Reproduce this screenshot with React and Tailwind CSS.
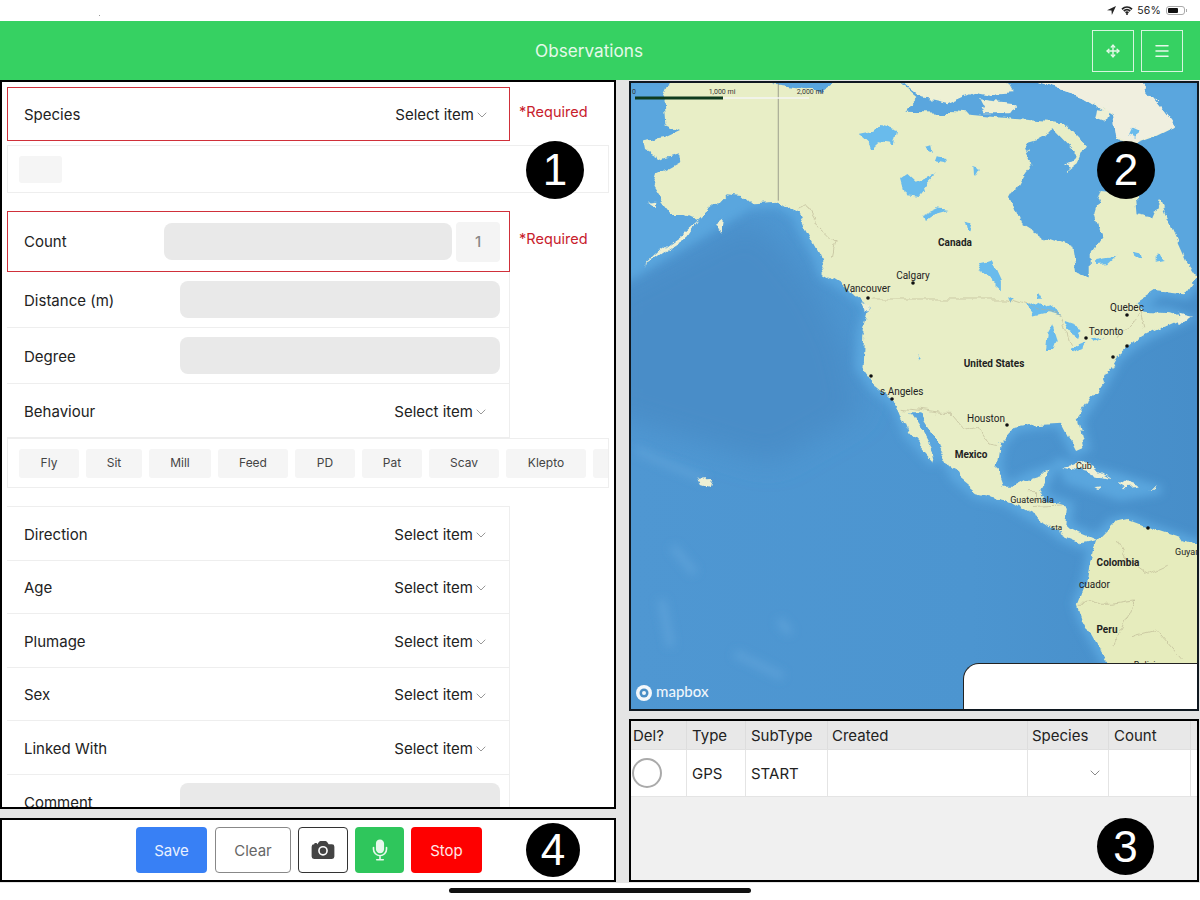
import React from "react";
import { ChevronDown, Menu, Move } from "lucide-react";
import { IoCamera, IoMic } from "react-icons/io5";

const F = "font-['Inter','Liberation_Sans',sans-serif]";

const Badge = ({ n, className }) => (
  <div className={`absolute flex items-center justify-center rounded-full bg-black text-white text-[44px] leading-none font-['Liberation_Sans',sans-serif] ${className}`}>{n}</div>
);

const Select = () => (
  <span className="flex items-center text-[15px] text-[#222]">
    Select item
    <ChevronDown size={16} strokeWidth={1.3} className="text-[#888]" />
  </span>
);

const Row = ({ label, children, h = "h-[53.6px]" }) => (
  <div className={`flex items-center justify-between w-[503px] ${h} pl-[17px] border-b border-r border-[#eeeeee] text-[15px] text-[#222] shrink-0`}>
    <span className="pt-[3px]">{label}</span>
    {children}
  </div>
);

const SelectRow = ({ label }) => (
  <Row label={label}><span className="pr-[20px] pt-[3px]"><Select /></span></Row>
);

const Field = () => <div className="w-[320px] h-[37px] mr-[9px] rounded-lg bg-[#e9e9e9]" />;

const Required = ({ className }) => (
  <span className={`absolute left-[517px] text-[14.5px] tracking-[0.05px] text-[#c8202c] ${className}`}>*Required</span>
);

const chips = [
  ["Fly", "w-[60px]"], ["Sit", "w-[56px]"], ["Mill", "w-[62px]"], ["Feed", "w-[70px]"],
  ["PD", "w-[60px]"], ["Pat", "w-[60px]"], ["Scav", "w-[70px]"], ["Klepto", "w-[80px]"],
];

const land = "M130 0L105 60L110 130L150 150L110 170L55 180L60 210L100 235L145 220L148 250L115 270L85 285L75 320L95 355L130 405L165 405L195 420L215 400L250 370L275 340L320 345L345 370L420 365L470 400L490 450L530 530L545 580L590 610L640 650L670 680L650 760L645 860L680 915L730 960L750 990L775 1060L845 1145L840 1120L805 1050L775 1000L800 1000L870 1120L905 1190L960 1240L1040 1260L1100 1300L1150 1330L1200 1370L1245 1390L1285 1380L1240 1360L1200 1340L1205 1280L1150 1260L1130 1230L1155 1175L1110 1190L1060 1220L1030 1220L1010 1160L1020 1090L1060 1040L1120 1030L1190 1025L1230 1110L1250 1100L1232 1020L1300 910L1340 830L1385 790L1430 760L1520 715L1480 700L1420 695L1395 670L1450 630L1530 640L1560 590L1530 540L1490 440L1460 360L1440 410L1395 400L1390 340L1300 330L1280 400L1290 440L1300 470L1270 520L1270 600L1230 570L1220 500L1140 470L1080 430L1050 350L1080 290L1110 250L1090 190L1120 180L1170 150L1240 230L1205 280L1240 250L1260 200L1200 130L1100 120L1000 110L900 100L770 95L800 60L740 0L580 0L530 35L420 20L380 0Z";
const southAm = "M1285 1380L1275 1410L1260 1500L1235 1570L1250 1620L1310 1740L1350 1800L1600 1800L1600 1410L1500 1370L1430 1345L1370 1320L1330 1330Z";
const islands = [
  "M745 0L1040 0L1060 40L1000 45L950 35L880 70L800 50Z",
  "M960 58L1060 70L1040 100L980 100Z",
  "M1100 0L1250 50L1340 110L1340 180L1400 190L1450 170L1505 140L1470 90L1400 0Z",
  "M1195 1160L1250 1145L1330 1195L1270 1180Z",
  "M1350 1200L1405 1220L1360 1225Z",
  "M1280 1225L1300 1222L1290 1230Z",
  "M1430 1222L1450 1222L1445 1228Z",
  "M200 420L170 470L100 520L50 560L100 510L150 470Z",
  "M240 440L265 420L260 455Z",
  "M60 365L80 362L78 378Z",
  "M640 655L665 670L672 695L650 675Z",
  "M205 1190L235 1188L228 1220L212 1215Z",
  "M1197 250L1235 240L1222 262Z",
  "M1500 695L1540 705L1510 730Z",
  "M1290 85L1320 90L1310 125L1285 115Z",
];
const lakes = [
  "M635 165L680 155L700 135L740 150L730 195L690 190L670 210L660 190Z",
  "M750 300L770 285L790 305L850 280L825 310L800 345L760 340Z",
  "M810 405L850 385L885 390L835 405L815 420Z",
  "M965 550L985 545L1000 540L1025 600L1025 625L1000 600L985 590Z",
  "M1090 680L1130 665L1190 710L1150 700L1110 710Z",
  "M1165 730L1180 780L1170 810L1145 810L1150 760Z",
  "M1200 725L1250 745L1240 775L1215 760Z",
  "M1205 810L1260 785L1250 805L1215 820Z",
  "M1270 775L1300 770L1280 782Z",
  "M925 425L945 430L938 460L930 450Z",
  "M1285 540L1340 530L1320 550L1285 552Z",
  "M1385 515L1405 520L1410 545L1390 535Z",
  "M1380 140L1400 150L1395 170L1372 160Z",
  "M950 255L965 260L952 285Z",
  "M1450 525L1475 540L1450 545Z",
  "M1045 645L1060 655L1050 665Z",
  "M800 815L812 830L805 835Z",
  "M1130 630L1140 650L1125 650Z",
  "M820 195L835 190L840 215L825 210Z",
  "M850 235L880 240L870 255L845 250Z",
];
const borders = [
  "M470 390L500 380L530 440L570 480L560 530",
  "M670 657L1040 657L1090 675L1190 710L1215 800",
  "M1340 775L1385 730L1410 695L1420 745",
  "M760 985L860 1000L890 1000L925 1045L960 1035L995 1095L1015 1100",
  "M1100 1235L1125 1235L1125 1260M1110 1280L1190 1275",
  "M1340 1380L1370 1440L1420 1480L1480 1450M1240 1570L1330 1570L1390 1560L1330 1700M1380 1670L1450 1650L1520 1740",
];

const Label = ({ x, y, bold, size = 10, anchor = "middle", fill = "#222", children }) => (
  <text x={x} y={y} textAnchor={anchor} fontSize={size} fontWeight={bold ? 700 : 400} fill={fill} fontFamily="Roboto, 'Liberation Sans', sans-serif">{children}</text>
);

const dots = [[913,283],[868,298],[1127,315],[1086,338],[1127,346],[1113,357],[871,376],[892,399],[1007,425],[1148,528]];

const MapArt = () => (
  <svg viewBox="631 83 566 626" className="block w-full h-full">
    <defs>
      <linearGradient id="sea" x1="0" y1="0" x2="1" y2="0">
        <stop offset="0" stopColor="#4f97d2" />
        <stop offset="0.6" stopColor="#4c95d0" />
        <stop offset="1" stopColor="#478ec9" />
      </linearGradient>
      <filter id="soft" filterUnits="userSpaceOnUse" x="-100" y="-100" width="1900" height="2100"><feGaussianBlur stdDeviation="12" /></filter>
      <filter id="softer" filterUnits="userSpaceOnUse" x="-200" y="-100" width="1900" height="2100"><feGaussianBlur stdDeviation="40" /></filter>
      <filter id="coast" filterUnits="userSpaceOnUse" x="-100" y="-100" width="1900" height="2100">
        <feTurbulence type="fractalNoise" baseFrequency="0.018" numOctaves="4" seed="7" />
        <feDisplacementMap in="SourceGraphic" scale="34" xChannelSelector="R" yChannelSelector="G" />
      </filter>
    </defs>
    <rect x="631" y="83" width="566" height="626" fill="url(#sea)" />
    <g transform="translate(625 80) scale(0.3667 0.3333)">
      <path d="M-50 640L340 420L430 500L530 640L600 800L640 1000L400 1150L-50 1000Z" fill="#488dc8" filter="url(#softer)" />
      <g filter="url(#soft)">
        <path d="M0 0H1568V560L1400 700L1000 600L400 300L340 390L0 610Z" fill="#5aa6de" />
        <path d={land} fill="#5aa6de" stroke="#5aa6de" strokeWidth="36" />
        <path d={southAm} fill="#5aa6de" stroke="#5aa6de" strokeWidth="30" />
        <path d="M1190 1150L1340 1190L1460 1230L1350 1250L1210 1200Z" fill="#5aa6de" stroke="#5aa6de" strokeWidth="24" />
        <path d="M130 1400L190 1480M100 1560L125 1700M300 1720L430 1790M420 1620L450 1660M30 1110L110 1150L220 1200" stroke="#5ba0d8" strokeWidth="22" fill="none" />
      </g>
      <g filter="url(#coast)">
        <path d={land} fill="#e8eec6" strokeLinejoin="round" />
        <path d={southAm} fill="#e6ecbd" />
        {islands.map((d) => <path key={d} d={d} fill="#eef0d4" />)}
        <path d="M1100 0L1400 0L1470 90L1505 140L1400 185L1340 170L1330 100L1250 50Z" fill="#f0efdf" />
        {lakes.map((d) => <path key={d} d={d} fill="#69bbec" />)}
        {borders.map((d) => <path key={d} d={d} fill="none" stroke="#b5ae8e" strokeWidth="1.6" />)}
      </g>
      <path d="M418 0L418 362" stroke="#7c7c74" strokeWidth="2" fill="none" />
    </g>
    <path d="M635 98H723" stroke="#0e3b1e" strokeWidth="3" />
    <path d="M723 98H809" stroke="#f5f5f5" strokeWidth="1.5" />
    <Label x={634} y={94} size={7} fill="#333">0</Label>
    <Label x={722} y={94} size={7} fill="#333">1,000 mi</Label>
    <Label x={810} y={94} size={7} fill="#333">2,000 mi</Label>
    {dots.map(([x, y]) => <circle key={x} cx={x} cy={y} r="1.8" fill="#111" />)}
    <Label x={955} y={246} bold>Canada</Label>
    <Label x={913} y={279}>Calgary</Label>
    <Label x={867} y={292}>Vancouver</Label>
    <Label x={1127} y={311}>Quebec</Label>
    <Label x={1106} y={335}>Toronto</Label>
    <Label x={994} y={367} bold>United States</Label>
    <Label x={880} y={395} anchor="start">s Angeles</Label>
    <Label x={986} y={422}>Houston</Label>
    <Label x={971} y={458} bold>Mexico</Label>
    <Label x={1076} y={469} anchor="start" size={9}>Cub</Label>
    <Label x={1032} y={503} size={9}>Guatemala</Label>
    <Label x={1051} y={530} anchor="start" size={8}>sta</Label>
    <Label x={1118} y={566} bold>Colombia</Label>
    <Label x={1079} y={588} anchor="start">cuador</Label>
    <Label x={1107} y={633} bold>Peru</Label>
    <Label x={1175} y={555} anchor="start" size={9}>Guyana</Label>
    <Label x={1147} y={668} size={9}>Bolivia</Label>
    <circle cx="644" cy="693" r="8" fill="#f4f8fb" />
    <circle cx="644" cy="693" r="4.5" fill="#4b8fc6" />
    <circle cx="644" cy="693" r="2" fill="#f4f8fb" />
    <text x="656" y="697" fontSize="15" fontWeight="500" fill="#eef5fb" fontFamily="Lato, sans-serif">mapbox</text>
  </svg>
);

const cols = ["w-[56px]", "w-[59px]", "w-[82px]", "w-[200px]", "w-[81px]", "w-[82px]"];
const heads = ["Del?", "Type", "SubType", "Created", "Species", "Count"];

export default function App() {
  return (
    <div className={`relative w-[1200px] h-[900px] overflow-hidden bg-[#e4e4e4] flex flex-col ${F}`}>
      <div className="h-[21px] bg-white flex items-center justify-end pr-[15px] text-[#222] shrink-0">
        <span className="absolute left-[99px] top-[15px] w-px h-px bg-[#999]" />
        <svg viewBox="0 0 10 10" className="w-[9px] h-[9px] mr-[5px]"><path d="M10 0L0 4.6L5 5L5.4 10Z" fill="#222" /></svg>
        <svg viewBox="0 0 24 18" className="w-[12px] h-[9px] mr-[4px]"><path d="M2 6.500C8 1 16 1 22 6.500M5.500 10C9.500 6.500 14.500 6.500 18.500 10M9 13.500C11 12 13 12 15 13.500" fill="none" stroke="#222" strokeWidth="3.4" /><circle cx="12" cy="16" r="2" fill="#222" /></svg>
        <span className="text-[10.5px] mr-[5px] tracking-[0.2px]">56%</span>
        <div className="relative w-[19px] h-[9px] rounded-[3px] border border-[#aaa] p-px">
          <div className="w-[10px] h-full rounded-[1px] bg-[#111]" />
          <span className="absolute -right-[3px] top-[2px] w-[1px] h-[3px] bg-[#aaa]" />
        </div>
      </div>

      <div className="h-[59px] bg-[#36d162] flex items-center pl-[535px] pr-[17px] shrink-0">
        <span className="text-[17.2px] text-[#e6f9ea]">Observations</span>
        <div className="ml-auto flex gap-[7px]">
          <div className="w-[42px] h-[42px] border border-[#d7f5df] flex items-center justify-center"><Move size={14} strokeWidth={2.4} className="text-[#e6f9ea]" /></div>
          <div className="w-[42px] h-[42px] border border-[#d7f5df] flex items-center justify-center"><Menu size={18} strokeWidth={2} className="text-[#e6f9ea]" /></div>
        </div>
      </div>

      <div className="flex h-[803px] shrink-0">
        <div className="w-[616px] flex flex-col gap-[9px] shrink-0">
          <div className="relative h-[729px] border-2 border-black bg-white overflow-hidden pt-[5px] pl-[5px] flex flex-col">
            <div className="flex items-center justify-between w-[503px] h-[54px] pl-[16px] pr-[19px] pt-[2px] border border-[#d0303a] text-[15px] text-[#222] shrink-0">
              <span>Species</span>
              <Select />
            </div>
            <Required className="top-[19px]" />
            <div className="w-[602px] h-[48px] mt-[4px] px-[11px] pt-[10px] border border-[#eeeeee] shrink-0">
              <div className="w-[43px] h-[27px] bg-[#f5f5f5] rounded-[3px]" />
            </div>
            <Badge n="1" className="left-[524px] top-[59px] w-[58px] h-[58px]" />
            <div className="flex items-center w-[503px] h-[61px] mt-[18px] pl-[16px] border border-[#d0303a] text-[15px] text-[#222] shrink-0">
              <span className="w-[140px] pt-[2px]">Count</span>
              <div className="w-[288px] h-[37px] rounded-lg bg-[#e9e9e9]" />
              <div className="w-[44px] h-[40px] ml-[4px] pt-[2px] rounded bg-[#f4f4f4] flex items-center justify-center text-[15px] font-medium text-[#888]">1</div>
            </div>
            <Required className="top-[146px]" />
            <Row label="Distance (m)" h="h-[56px]"><Field /></Row>
            <Row label="Degree" h="h-[56px]"><Field /></Row>
            <Row label="Behaviour" h="h-[54px]"><span className="pr-[20px] pt-[3px]"><Select /></span></Row>
            <div className="w-[602px] h-[50px] border border-[#eeeeee] flex items-center gap-[7px] pl-[11px] overflow-hidden shrink-0">
              {chips.map(([c, w]) => (
                <div key={c} className={`${w} h-[29px] shrink-0 bg-[#f5f5f5] rounded-[3px] flex items-center justify-center text-[12px] text-[#444]`}>{c}</div>
              ))}
              <div className="w-[60px] h-[29px] shrink-0 bg-[#f5f5f5] rounded-[3px]" />
            </div>
            <div className="w-[503px] mt-[18px] border-t border-[#eeeeee] flex flex-col shrink-0">
              <SelectRow label="Direction" />
              <SelectRow label="Age" />
              <SelectRow label="Plumage" />
              <SelectRow label="Sex" />
              <SelectRow label="Linked With" />
              <div className="flex justify-between w-[503px] h-[54px] pl-[17px] pt-[8px] border-r border-[#eeeeee] text-[15px] text-[#222] shrink-0">
                <span className="mt-[9px]">Comment</span>
                <Field />
              </div>
            </div>
          </div>

          <div className="relative h-[64px] border-2 border-black bg-white flex items-center pl-[134px] gap-[7px]">
            <button className="w-[71px] h-[46px] pt-[2px] rounded bg-[#3880f5] text-[15px] text-[#e8f0ff]">Save</button>
            <button className="w-[76px] h-[46px] ml-px pt-[2px] rounded border border-[#888] bg-white text-[15px] text-[#666]">Clear</button>
            <button className="w-[50px] h-[46px] rounded border border-[#333] bg-white flex items-center justify-center"><IoCamera size={26} className="text-[#444]" /></button>
            <button className="w-[49px] h-[46px] rounded bg-[#2fc65c] flex items-center justify-center"><IoMic size={26} className="text-[#e8f8ec]" /></button>
            <button className="w-[71px] h-[46px] pt-[2px] rounded bg-[#fe0000] text-[15px] text-[#ffe8e8]">Stop</button>
            <Badge n="4" className="left-[524px] top-[3px] w-[54px] h-[54px]" />
          </div>
        </div>

        <div className="ml-[13px] w-[570px] pt-px flex flex-col gap-[8px] shrink-0">
          <div className="relative h-[630px] border-2 border-[#101820] overflow-hidden">
            <MapArt />
            <Badge n="2" className="left-[466px] top-[58px] w-[58px] h-[58px]" />
            <div className="absolute left-[332px] top-[580px] w-[240px] h-[50px] rounded-tl-2xl bg-white border-t border-l border-[#222]" />
          </div>
          <div className="relative h-[163px] border-2 border-black bg-[#f0f0f0] overflow-hidden text-[15px] text-[#222]">
            <div className="flex h-[29px] bg-[#e8e8e8] border-b border-[#e0e0e0]">
              {heads.map((t, i) => (
                <div key={t} className={`${cols[i]} shrink-0 border-r border-[#dddddd] flex items-center pt-[2px] ${i === 0 ? "pl-[2px]" : i === 3 || i === 4 ? "pl-[4px]" : "pl-[5px]"}`}>{t}</div>
              ))}
              <div className="flex-1" />
            </div>
            <div className="flex h-[47px] bg-white border-b border-[#e4e4e4]">
              <div className={`${cols[0]} shrink-0 border-r border-[#e4e4e4] flex items-center pl-[1px]`}>
                <div className="w-[30px] h-[30px] rounded-full border-2 border-[#aaaaaa]" />
              </div>
              <div className={`${cols[1]} shrink-0 border-r border-[#e4e4e4] flex items-center pl-[5px] pt-[2px]`}>GPS</div>
              <div className={`${cols[2]} shrink-0 border-r border-[#e4e4e4] flex items-center pl-[5px] pt-[2px]`}>START</div>
              <div className={`${cols[3]} shrink-0 border-r border-[#e4e4e4]`} />
              <div className={`${cols[4]} shrink-0 border-r border-[#e4e4e4] flex items-center justify-end pr-[5px]`}>
                <ChevronDown size={16} strokeWidth={1.3} className="text-[#777]" />
              </div>
              <div className={`${cols[5]} shrink-0 border-r border-[#e4e4e4]`} />
            </div>
            <Badge n="3" className="left-[466px] top-[97px] w-[57px] h-[57px]" />
          </div>
        </div>
      </div>

      <div className="flex-1 bg-white flex justify-center pt-[5px]">
        <div className="w-[302px] h-[5px] rounded-full bg-[#111]" />
      </div>
    </div>
  );
}
